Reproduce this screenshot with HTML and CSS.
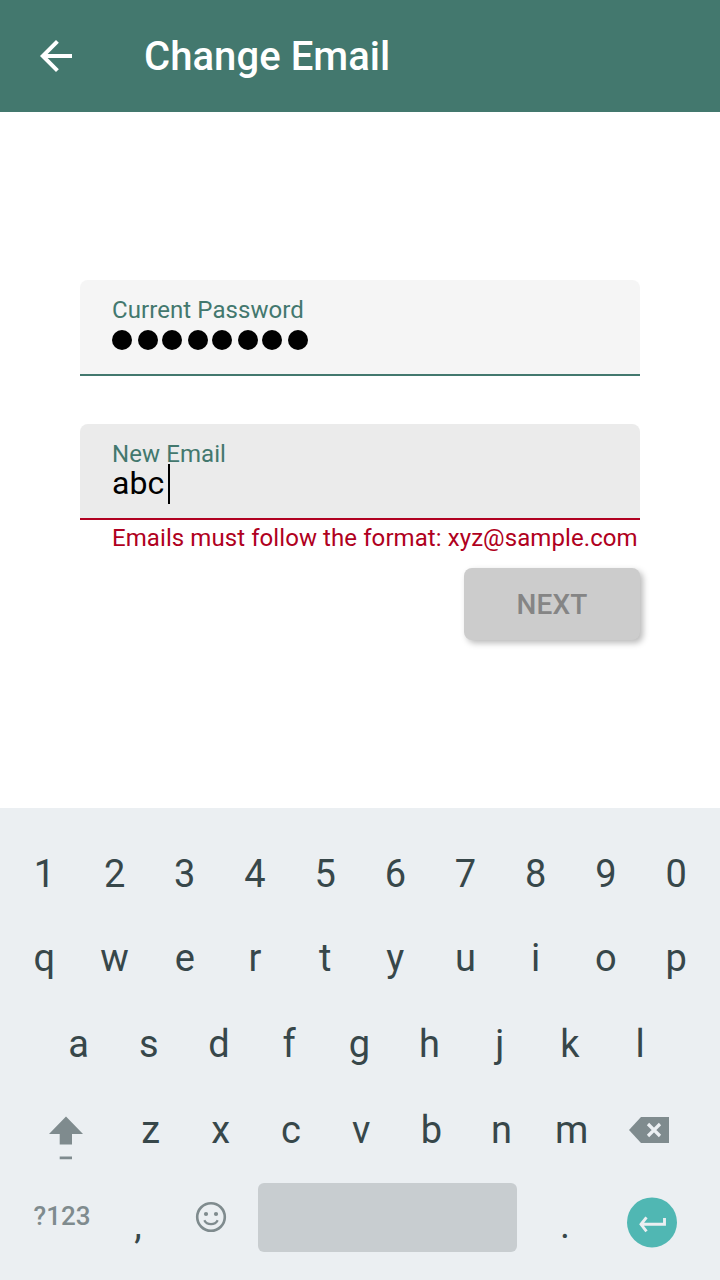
FILE: index.html
```
<!DOCTYPE html>
<html lang="en">
<head>
<meta charset="utf-8">
<title>Change Email</title>
<link rel="stylesheet" href="styles.css">
</head>
<body>
<div class="screen">
  <header class="app-bar">
    <svg class="back" width="32" height="32" viewBox="0 0 32 32"><path d="M32 14H7.66L18.84 2.82 16 0 0 16l16 16 2.82-2.82L7.66 18H32z" fill="#fff"/></svg>
    <h1 class="title">Change Email</h1>
  </header>
  <main class="form">
    <div class="field">
      <div class="label">Current Password</div>
      <div class="dots"><i></i><i></i><i></i><i></i><i></i><i></i><i></i><i></i></div>
    </div>
    <div class="field field-error">
      <div class="label">New Email</div>
      <div class="value"><span>abc</span><span class="caret"></span></div>
    </div>
    <div class="error">Emails must follow the format: xyz@sample.com</div>
    <button class="next">NEXT</button>
  </main>
  <section class="keyboard">
    <div class="row row-digits"><span>1</span><span>2</span><span>3</span><span>4</span><span>5</span><span>6</span><span>7</span><span>8</span><span>9</span><span>0</span></div>
    <div class="row row-top"><span>q</span><span>w</span><span>e</span><span>r</span><span>t</span><span>y</span><span>u</span><span>i</span><span>o</span><span>p</span></div>
    <div class="row row-home"><span>a</span><span>s</span><span>d</span><span>f</span><span>g</span><span>h</span><span>j</span><span>k</span><span>l</span></div>
    <div class="row row-bottom">
      <svg class="shift" width="34" height="44" viewBox="0 0 34 44"><path d="M17 .5L34 18H23v10.500H10.700V18H0zM10.700 40.400H23v2.800H10.700z" fill="#7f8b8e"/></svg>
      <span>z</span><span>x</span><span>c</span><span>v</span><span>b</span><span>n</span><span>m</span>
      <svg class="backspace" width="40" height="26" viewBox="0 0 40 26"><path d="M0 13L12 0h28v26H12z" fill="#7f8b8e"/><path d="M19 7l12 12M31 7L19 19" stroke="#ebeff2" stroke-width="3.200" fill="none"/></svg>
    </div>
    <div class="row row-space">
      <span class="symbols">?123</span>
      <span class="comma">,</span>
      <svg class="emoji" width="32" height="32" viewBox="0 0 32 32"><circle cx="16" cy="16" r="13.800" fill="none" stroke="#7f8b8e" stroke-width="2.600"/><circle cx="11" cy="13" r="2.100" fill="#7f8b8e"/><circle cx="21" cy="13" r="2.100" fill="#7f8b8e"/><path d="M9.300 19.300C12 24.500 20 24.500 22.700 19.300" fill="none" stroke="#7f8b8e" stroke-width="2.300"/></svg>
      <span class="space"></span>
      <span class="period">.</span>
      <svg class="enter" width="50" height="51" viewBox="0 0 50 51"><circle cx="25" cy="25.400" r="25" fill="#50b7b3"/><path d="M19.500 20.300L14 27.300l5.500 7M14 27.300h23.500V21.100" fill="none" stroke="#ebeff2" stroke-width="2.900"/></svg>
    </div>
  </section>
</div>
</body>
</html>
```
FILE: styles.css
```
* { box-sizing: border-box; }
body { margin: 0; font-family: Roboto, sans-serif; background: #fff; }
.screen { width: 720px; height: 1280px; display: flex; flex-direction: column; overflow: hidden; }
.app-bar { height: 112px; background: #43786e; display: flex; align-items: center; padding-left: 40px; gap: 72px; }
.title { margin: 0; padding-top: 2px; font-size: 40px; font-weight: 500; line-height: 110px; color: #fff; letter-spacing: .06px; }
.form { height: 696px; padding: 168px 80px 0; display: flex; flex-direction: column; }
.field { height: 96px; padding: 18px 32px 0; border-radius: 8px 8px 0 0; background: linear-gradient(#43786e, #43786e) bottom / 100% 2px no-repeat #f5f5f5; }
.field-error { margin-top: 48px; background: linear-gradient(#b00020, #b00020) bottom / 100% 2px no-repeat #ebebeb; }
.label { height: 24px; line-height: 24px; font-size: 24px; color: #43786e; letter-spacing: .08px; }
.dots { display: flex; padding-top: 8px; }
.dots i { width: 20px; height: 20px; border-radius: 50%; background: #000; margin-right: 6px; }
.dots i:nth-child(even) { margin-right: 4px; }
.value { height: 40px; margin-top: -2px; display: flex; align-items: center; font-size: 32px; line-height: 38px; color: #000; }
.value span:first-child { margin-top: -2px; }
.caret { width: 2px; height: 40px; margin-left: 4px; background: #000; }
.error { margin: 0 0 0 32px; height: 48px; line-height: 36px; font-size: 24px; white-space: nowrap; color: #b00020; letter-spacing: .08px; }
.next { align-self: flex-end; width: 176px; height: 72px; padding: 2px 0 0; border: 0; border-radius: 8px; background: #ccc; color: #858585; font: 500 28px/70px Roboto, sans-serif; letter-spacing: .1px; box-shadow: 3px 3px 6px rgba(0,0,0,.28); }
.keyboard { height: 472px; padding-top: 24px; background: #ebeff2; color: #37474a; font-size: 38px; }
.row { display: flex; align-items: center; }
.row > span { flex: none; width: 70.2px; text-align: center; line-height: 44px; }
.row-digits { height: 84px; padding-left: 9.300px; }
.row-top { height: 84px; padding-left: 9.300px; }
.row-home { height: 87px; padding-left: 43.500px; }
.row-bottom { height: 86px; padding-left: 48.500px; }
.shift { margin: 16px 33px 0 0; }
.backspace { margin-left: 22.500px; }
.row-space { height: 107px; align-items: flex-start; }
.row-space > .symbols { width: 124px; margin-top: 21px; font-size: 26px; font-weight: 500; color: #7f8b8e; }
.row-space > .comma { width: 28px; margin-top: 30px; }
.emoji { margin: 27.500px 31px 0 43px; }
.row-space > .space { width: 259px; height: 68.500px; margin-top: 10.300px; border-radius: 6px; background: #c8cdd0; }
.row-space > .period { width: 96px; margin-top: 30px; }
.enter { margin: 24px 0 0 14px; }
```
